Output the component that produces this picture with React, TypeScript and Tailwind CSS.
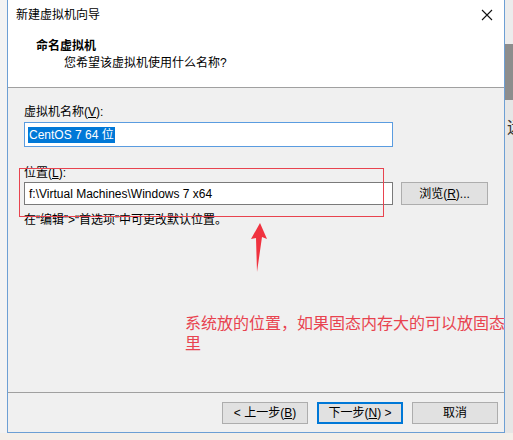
import React from 'react';

const ui = { fontFamily: '"Liberation Sans", "Noto Sans CJK SC", sans-serif' };

function WinButton({ children, primary }: { children: React.ReactNode; primary?: boolean }) {
  return (
    <button
      className={
        primary
          ? 'w-[86px] h-[22px] border-2 border-[#0078d7] bg-[#e1e1e1] text-[12px] leading-none text-black'
          : 'w-[86px] h-[22px] border border-[#adadad] bg-[#e1e1e1] text-[12px] leading-none text-black'
      }
    >
      {children}
    </button>
  );
}

export default function App() {
  return (
    <div className="relative w-[513px] h-[440px] overflow-hidden bg-[#f4efe9] flex" style={ui}>
      {/* desktop strip on the left */}
      <div className="w-[7px] h-[433px] bg-[#f3f3f3]" />

      {/* dialog */}
      <div className="w-[498px] h-[433px] flex flex-col border-x border-b border-[#6d9fd4] bg-[#f0f0f0]">
        <div className="h-[88px] bg-white border-b border-[#a0a0a0] flex flex-col">
          <div className="h-[30px] flex items-center justify-between pl-[8px] pr-[8px]">
            <span className="text-[12px] text-black">新建虚拟机向导</span>
            <svg width="12" height="12" viewBox="0 0 12 12" className="mr-[3px]">
              <path d="M1 1 L11 11 M11 1 L1 11" stroke="#111" strokeWidth="1.1" />
            </svg>
          </div>
          <div className="mt-[8px] pl-[28px] text-[12px] leading-[16px] font-bold text-black">命名虚拟机</div>
          <div className="mt-[1px] pl-[56px] text-[12px] leading-[16px] text-black">您希望该虚拟机使用什么名称?</div>
        </div>

        <div className="h-[304px] flex flex-col pl-[16px] pt-[16px] text-[12px] text-black">
          <div className="leading-[16px]">
            虚拟机名称(<span className="underline">V</span>):
          </div>
          <div className="mt-[2px] w-[369px] h-[25px] border border-[#5a9ce0] bg-white flex items-center pl-[3px]">
            <span className="bg-[#0078d7] text-white leading-[16px] px-[1px]">CentOS 7 64 位</span>
          </div>

          <div className="mt-[18px] leading-[16px]">
            位置(<span className="underline">L</span>):
          </div>
          <div className="mt-[1px] flex items-center gap-[8px]">
            <div className="w-[369px] h-[23px] border border-[#7a7a7a] bg-white flex items-center pl-[4px]">
              f:\Virtual Machines\Windows 7 x64
            </div>
            <button className="w-[87px] h-[23px] border border-[#adadad] bg-[#e1e1e1] text-[12px]">
              浏览(<span className="underline">R</span>)...
            </button>
          </div>
          <div className="mt-[7px] leading-[16px]">在“编辑”&gt;“首选项”中可更改默认位置。</div>
        </div>

        <div className="h-[40px] border-t border-[#a0a0a0] flex justify-end items-start pt-[9px] pr-[6px] gap-[9px]">
          <WinButton>
            &lt; 上一步(<span className="underline">B</span>)
          </WinButton>
          <WinButton primary>
            下一步(<span className="underline">N</span>) &gt;
          </WinButton>
          <WinButton>取消</WinButton>
        </div>
      </div>

      {/* desktop strip on the right */}
      <div className="relative w-[8px] h-[433px] bg-[#e6e6e6] overflow-hidden">
        <div className="h-[44px] bg-[#ececec]" />
        <div className="h-[56px] bg-[#8d8d8d]" />
        <div className="absolute left-[2px] top-[116px] text-[16px] text-[#333]">远</div>
      </div>

      {/* annotation: red box */}
      <div className="absolute left-[19px] top-[168px] w-[365px] h-[49px] border border-[#e8434f]" />

      {/* annotation: arrow */}
      <svg className="absolute left-[250px] top-[222px]" width="20" height="52" viewBox="0 0 20 52">
        <polygon points="10,1 17,17 12,15 7,50 6,16 1,17" fill="#f0323f" />
      </svg>

      {/* annotation: note */}
      <div
        className="absolute left-[185px] top-[312px] flex flex-col text-[16px] leading-[20px] text-[#e8434f] whitespace-nowrap"
        style={{ fontFamily: '"Noto Sans CJK SC", sans-serif' }}
      >
        <span>系统放的位置，如果固态内存大的可以放固态</span>
        <span>里</span>
      </div>
    </div>
  );
}
